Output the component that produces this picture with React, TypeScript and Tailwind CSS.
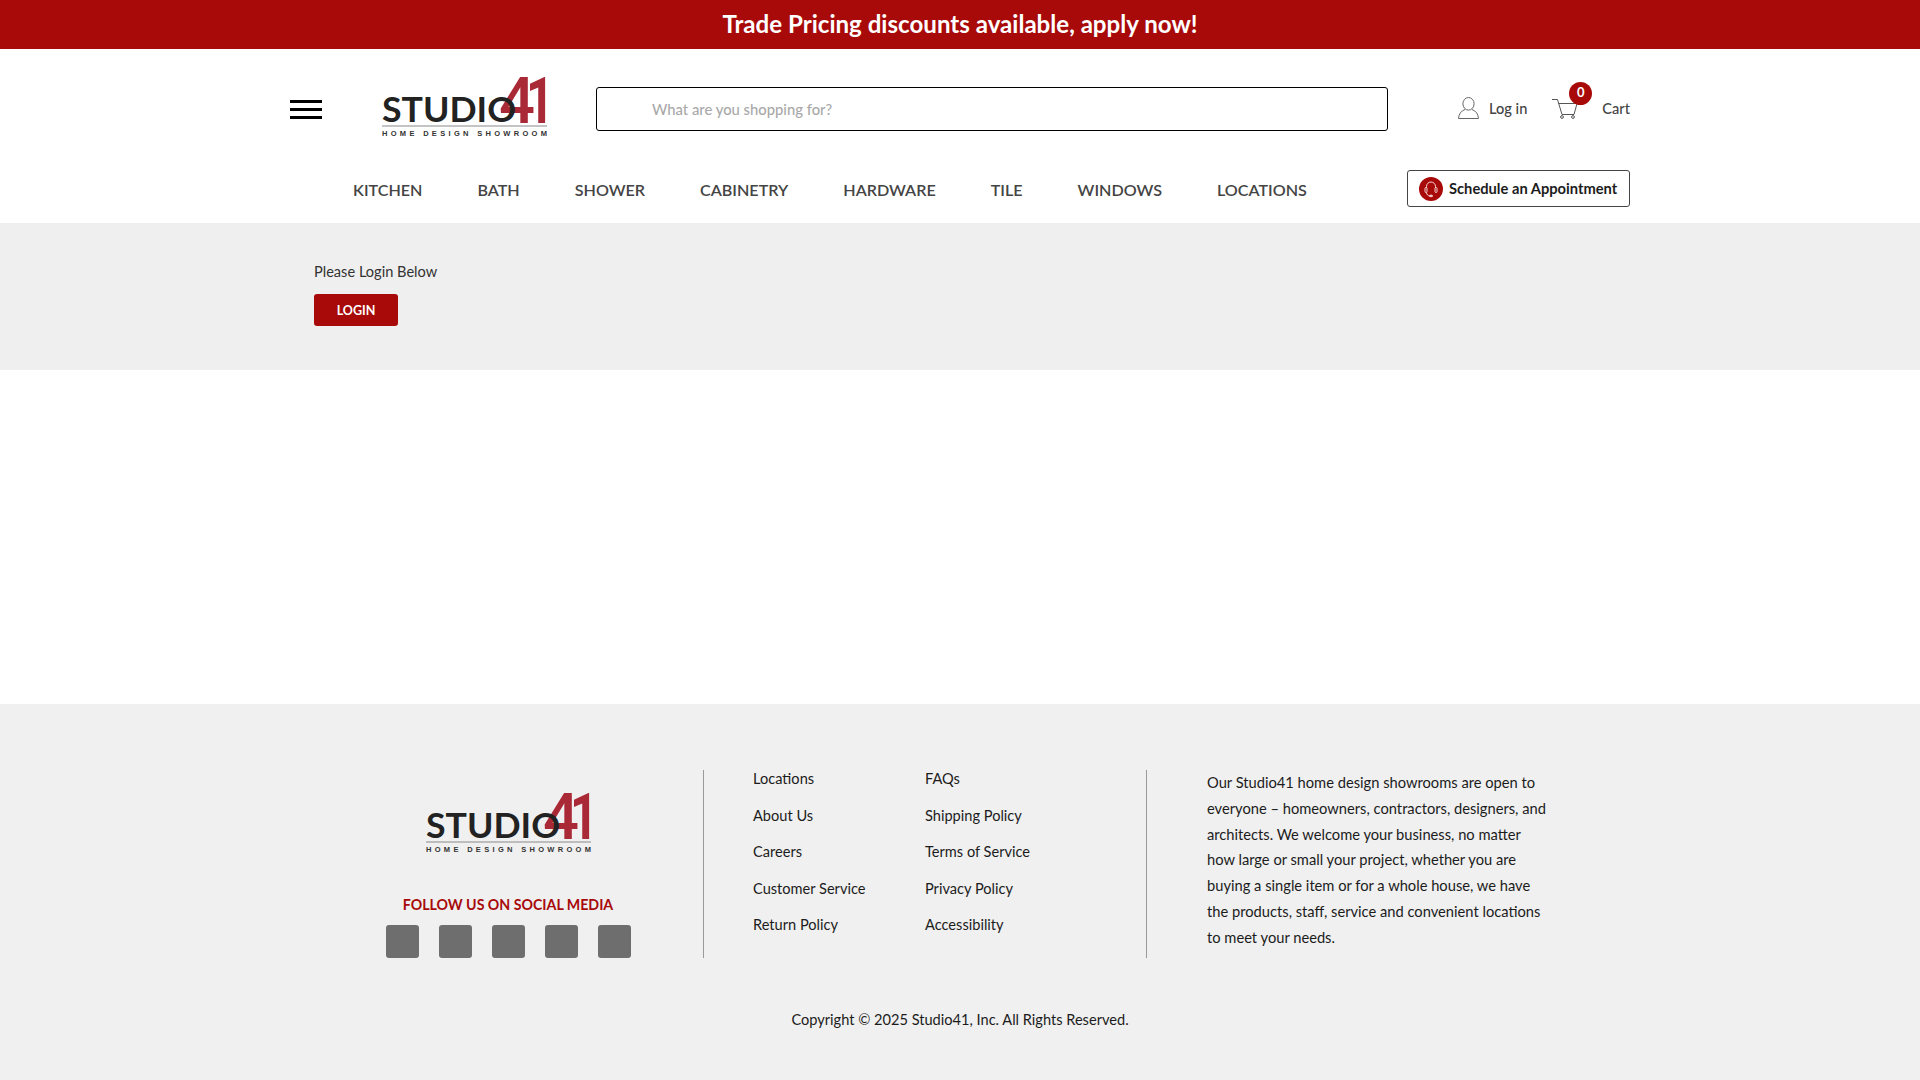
import React from "react";

function Logo() {
  return (
    <svg viewBox="0 0 165 62" className="w-[165px] h-[62px] block overflow-visible">
      <text x="117" y="48" fontFamily="Roboto, sans-serif" fontWeight="500" fontSize="65" fill="#a92a36" textLength="36" lengthAdjust="spacingAndGlyphs">4</text>
      <text x="144" y="48" fontFamily="Roboto, sans-serif" fontWeight="700" fontSize="65" fill="#a92a36" textLength="28" lengthAdjust="spacingAndGlyphs">1</text>
      <text x="0" y="47" fontFamily="Lato, sans-serif" fontWeight="700" fontSize="34.5" fill="#222222" textLength="134" lengthAdjust="spacingAndGlyphs">STUDIO</text>
      <rect x="0" y="50.5" width="165" height="1" fill="#8a8a8a" />
      <text x="0" y="61" fontFamily="'Liberation Sans', sans-serif" fontWeight="700" fontSize="7.5" fill="#333333" textLength="165" lengthAdjust="spacing">HOME DESIGN SHOWROOM</text>
    </svg>
  );
}

function UserIcon() {
  return (
    <svg viewBox="0 0 21 22" className="w-[21px] h-[22px]" fill="none" stroke="#666" strokeWidth="1">
      <ellipse cx="10.5" cy="6.8" rx="5.6" ry="6.3" />
      <path d="M7 12.5C3 14 .8 17 .5 21.5h20C20.2 17 18 14 14 12.5" />
    </svg>
  );
}

function CartIcon() {
  return (
    <svg viewBox="0 0 26 20" className="w-[26px] h-[20px]" fill="none" stroke="#555" strokeWidth="1">
      <path d="M0 .5h5.5L10 15.5h12L25 4.5H6.5" />
      <circle cx="10" cy="18" r="1.4" />
      <circle cx="21" cy="18" r="1.4" />
    </svg>
  );
}

function HeadsetIcon() {
  return (
    <span className="w-[24px] h-[24px] rounded-full bg-[#a80a0a] flex items-center justify-center shrink-0">
      <svg viewBox="0 0 24 24" className="w-[24px] h-[24px]" fill="none" stroke="#f6d5d5" strokeWidth="1">
        <path d="M7.5 11V9.5a4.5 4.5 0 0 1 9 0V11" />
        <rect x="6" y="10.5" width="2" height="5" rx="1" />
        <rect x="16" y="10.5" width="2" height="5" rx="1" />
        <path d="M7.5 15.5c.3 2.3 1.6 3.3 3 3.4" />
        <rect x="10.5" y="18.2" width="3" height="1.4" rx=".6" fill="#f6d5d5" />
      </svg>
    </span>
  );
}

const nav = ["KITCHEN", "BATH", "SHOWER", "CABINETRY", "HARDWARE", "TILE", "WINDOWS", "LOCATIONS"];
const links = [
  "Locations", "FAQs",
  "About Us", "Shipping Policy",
  "Careers", "Terms of Service",
  "Customer Service", "Privacy Policy",
  "Return Policy", "Accessibility",
];

export default function App() {
  return (
    <div className="w-full h-[1080px] bg-white overflow-hidden font-['Lato',sans-serif] text-[#1c1c1c]">
      <div className="h-[49px] bg-[#a80a0a] flex items-center justify-center text-white text-[24.1px] font-bold">
        Trade Pricing discounts available, apply now!
      </div>

      <header className="h-[174px]">
        <div className="h-[121px] flex items-center pl-[290px] pr-[290px]">
          <div className="w-[32px] flex flex-col gap-[5px]">
            <span className="h-[3px] bg-black" />
            <span className="h-[3px] bg-black" />
            <span className="h-[3px] bg-black" />
          </div>
          <div className="ml-[60px] mb-[7px]"><Logo /></div>
          <div className="ml-[49px] mb-[1px] w-[792px] h-[44px] border border-black rounded-[3px] flex items-center pl-[55px] text-[14.8px] text-[#a9a9a9] font-medium">
            What are you shopping for?
          </div>
          <div className="flex-1 flex items-center justify-end mb-[2px] text-[14.6px] font-medium text-[#444]">
            <span className="mb-[1px]"><UserIcon /></span>
            <span className="ml-[10px]">Log in</span>
            <div className="relative ml-[25px]">
              <CartIcon />
              <span className="absolute left-[17px] top-[-17px] w-[23px] h-[23px] rounded-full bg-[#a80a0a] text-white text-[13px] font-bold flex items-center justify-center">0</span>
            </div>
            <span className="ml-[24px]">Cart</span>
          </div>
        </div>
        <div className="h-[37px] flex items-center justify-between pl-[353px] pr-[290px]">
          <nav className="flex gap-[55px] pt-[3px] text-[16.14px] font-semibold text-[#444]">
            {nav.map((n) => <span key={n}>{n}</span>)}
          </nav>
          <div className="w-[223px] h-[37px] border border-[#444] rounded-[3px] flex items-center pl-[11px] gap-[6px] text-[14.7px] font-bold text-[#1c1c1c] whitespace-nowrap">
            <HeadsetIcon />
            Schedule an Appointment
          </div>
        </div>
      </header>

      <section className="h-[147px] bg-[#efefef] pl-[314px] pt-[38px]">
        <p className="text-[14.6px] leading-[22px] text-[#333]">Please Login Below</p>
        <div className="mt-[11px] w-[84px] h-[32px] rounded-[3px] bg-[#a80a0a] text-white text-[12.5px] font-bold flex items-center justify-center pt-[2px]">LOGIN</div>
      </section>

      <div className="h-[334px]" />

      <footer className="h-[376px] bg-[#f0f0f0] pt-[66px]">
        <div className="flex h-[188px] pl-[313px]">
          <div className="w-[390px] flex flex-col items-center pt-[21px]">
            <Logo />
            <p className="mt-[42px] text-[14.2px] leading-[20px] font-bold text-[#a80a0a]">FOLLOW US ON SOCIAL MEDIA</p>
            <div className="mt-[10px] flex gap-[20px]">
              {[0, 1, 2, 3, 4].map((i) => <span key={i} className="w-[33px] h-[33px] rounded-[3px] bg-[#6e6e6e]" />)}
            </div>
          </div>
          <div className="w-[444px] border-l border-r border-[#999] pl-[49px]">
            <div className="grid grid-cols-[172px_1fr] gap-y-[18.6px] text-[14.6px] leading-[18px]">
              {links.map((l) => <span key={l}>{l}</span>)}
            </div>
          </div>
          <p className="ml-[60px] w-[342px] text-[14.7px] leading-[25.8px]">
            Our Studio41 home design showrooms are open to everyone – homeowners, contractors, designers, and architects. We welcome your business, no matter how large or small your project, whether you are buying a single item or for a whole house, we have the products, staff, service and convenient locations to meet your needs.
          </p>
        </div>
        <p className="mt-[52px] text-center text-[14.6px] leading-[20px]">Copyright © 2025 Studio41, Inc. All Rights Reserved.</p>
      </footer>
    </div>
  );
}
